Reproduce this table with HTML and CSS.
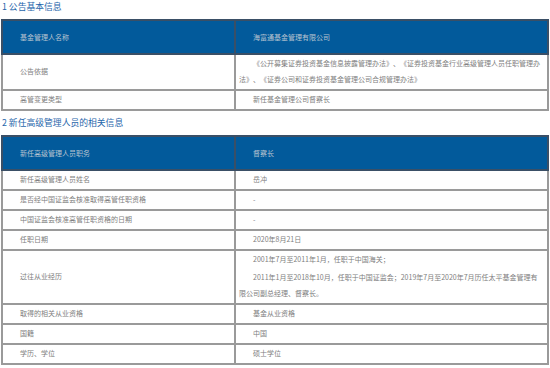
FILE: index.html
```html
<!DOCTYPE html>
<html lang="zh-CN">
<head>
<meta charset="utf-8">
<link rel="stylesheet" href="styles.css">
</head>
<body>
<div class="page">
  <h2 class="sec sec-first">1 公告基本信息</h2>
  <table class="info">
    <colgroup><col class="c1"><col class="c2"></colgroup>
    <tr class="head">
      <td><p>基金管理人名称</p></td>
      <td><p>海富通基金管理有限公司</p></td>
    </tr>
    <tr>
      <td><p>公告依据</p></td>
      <td><p>《公开募集证券投资基金信息披露管理办法》、《证券投资基金行业高级管理人员任职管理办法》、《证券公司和证券投资基金管理公司合规管理办法》</p></td>
    </tr>
    <tr>
      <td><p>高管变更类型</p></td>
      <td><p>新任基金管理公司督察长</p></td>
    </tr>
  </table>

  <h2 class="sec">2 新任高级管理人员的相关信息</h2>
  <table class="info">
    <colgroup><col class="c1"><col class="c2"></colgroup>
    <tr class="head">
      <td><p>新任高级管理人员职务</p></td>
      <td><p>督察长</p></td>
    </tr>
    <tr>
      <td><p>新任高级管理人员姓名</p></td>
      <td><p>岳冲</p></td>
    </tr>
    <tr>
      <td><p>是否经中国证监会核准取得高管任职资格</p></td>
      <td><p>-</p></td>
    </tr>
    <tr>
      <td><p>中国证监会核准高管任职资格的日期</p></td>
      <td><p>-</p></td>
    </tr>
    <tr>
      <td><p>任职日期</p></td>
      <td><p>2020年8月21日</p></td>
    </tr>
    <tr>
      <td><p>过往从业经历</p></td>
      <td><p>2001年7月至2011年1月，任职于中国海关；</p><p>2011年1月至2018年10月，任职于中国证监会；2019年7月至2020年7月历任太平基金管理有限公司副总经理、督察长。</p></td>
    </tr>
    <tr>
      <td><p>取得的相关从业资格</p></td>
      <td><p>基金从业资格</p></td>
    </tr>
    <tr>
      <td><p>国籍</p></td>
      <td><p>中国</p></td>
    </tr>
    <tr>
      <td><p>学历、学位</p></td>
      <td><p>硕士学位</p></td>
    </tr>
  </table>
</div>
</body>
</html>
```
FILE: styles.css
```css
html, body {
  margin: 0;
  padding: 0;
  background: #ffffff;
}
body {
  font-family: "Noto Sans CJK SC", "Noto Sans", sans-serif;
  text-spacing-trim: space-all;
}
.page {
  padding-left: 1px;
  width: 546px;
}
.sec {
  margin: 5px 0 5px 1px;
  font-size: 8.8px;
  line-height: 14px;
  font-weight: normal;
  color: #1f66ab;
}
.sec-first {
  margin-top: 0;
}
.info {
  width: 546px;
  border-collapse: collapse;
  table-layout: fixed;
  border: 2px solid #8f8f8f;
}
.c1 { width: 233px; }
.c2 { width: 313px; }
.info td {
  border: 2px solid #9a9a9a;
  padding: 0 3px;
  vertical-align: middle;
  color: #808080;
  font-size: 7px;
}
.info td p {
  margin: 0 0 2px;
  line-height: 16px;
  text-indent: 2em;
}
.info .head td {
  background: #025a9b;
  color: #b7c3d0;
  padding-top: 8px;
  padding-bottom: 8px;
  border-color: #3a4f66;
}
.info .head td p {
  margin: 0;
}
```
